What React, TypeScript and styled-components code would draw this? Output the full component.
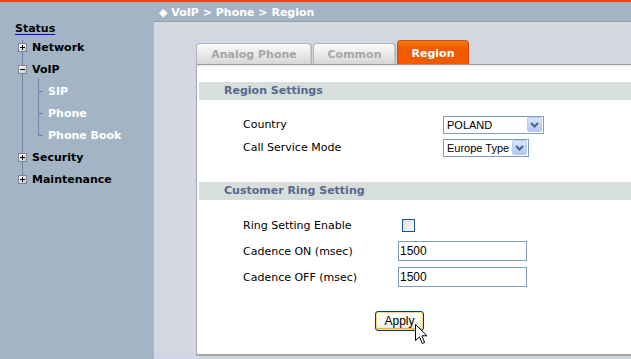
import React from 'react'
import styled, { createGlobalStyle } from 'styled-components'

const GlobalStyle = createGlobalStyle`
    html, body {
        margin: 0;
        padding: 0;
        background: #a3b5c5;
        overflow: hidden;
    }
    * { box-sizing: border-box; }
`

const verdana = `"DejaVu Sans", Verdana, sans-serif`
const arial = `"Liberation Sans", Arial, sans-serif`

const Page = styled.div`
    width: 631px;
    height: 359px;
    display: flex;
    flex-direction: column;
    font-family: ${verdana};
    font-size: 11px;
`

const TopStrip = styled.div`
    height: 2px;
    background: #f0450f;
    flex-shrink: 0;
`

const Body = styled.div`
    flex: 1;
    display: flex;
    min-height: 0;
`

const Sidebar = styled.nav`
    width: 154px;
    flex-shrink: 0;
    background: #a3b5c5;
    padding-top: 20px;
`

const StatusLink = styled.a`
    display: block;
    height: 14px;
    line-height: 14px;
    padding-left: 15px;
    font-weight: bold;
    color: #000;
    text-decoration: underline;
    text-decoration-color: #0000ff;
    text-underline-offset: 2px;
    cursor: pointer;
`

const Tree = styled.ul`
    position: relative;
    list-style: none;
    margin: 0;
    padding: 0;
    &::before {
        content: '';
        position: absolute;
        left: 22px;
        top: 4px;
        bottom: 10px;
        width: 1px;
        background: #7383a8;
    }
`

const SubTree = styled.ul`
    position: relative;
    list-style: none;
    margin: 0;
    padding: 0;
    &::before {
        content: '';
        position: absolute;
        left: 38px;
        top: -2px;
        bottom: 11px;
        width: 1px;
        background: #7383a8;
    }
`

const TreeRow = styled.li<{ $sub?: boolean }>`
    position: relative;
    height: 22px;
    display: flex;
    align-items: center;
    gap: 5px;
    padding-left: ${p => (p.$sub ? '48px' : '18px')};
    font-weight: bold;
    color: ${p => (p.$sub ? '#fff' : '#000')};
    ${p => p.$sub && `
        &::before {
            content: '';
            position: absolute;
            left: 38px;
            top: 11px;
            width: 5px;
            height: 1px;
            background: #7383a8;
        }
    `}
`

const Main = styled.main`
    flex: 1;
    display: flex;
    flex-direction: column;
    overflow: hidden;
    min-width: 0;
`

const Crumbs = styled.div`
    height: 20px;
    flex-shrink: 0;
    background: #a3b5c5;
    border-bottom: 1px solid #95a5a9;
    color: #fff;
    font-weight: bold;
    line-height: 21px;
    padding-left: 5px;
    white-space: nowrap;
`

const Canvas = styled.div`
    flex: 1;
    background: repeating-linear-gradient(to bottom, #cdd3ee 0 1px, #d8dcd6 1px 2px);
    padding: 18px 0 0 42px;
`

const Tabs = styled.div`
    display: flex;
    align-items: flex-end;
    gap: 1px;
    height: 24px;
`

const Tab = styled.div<{ $active?: boolean; $w: number }>`
    width: ${p => p.$w}px;
    height: ${p => (p.$active ? 24 : 21)}px;
    border-radius: 4px 4px 0 0;
    font-weight: bold;
    font-size: 11px;
    display: flex;
    align-items: center;
    justify-content: center;
    padding-top: ${p => (p.$active ? 2 : 0)}px;
    ${p =>
        p.$active
            ? `
        background: linear-gradient(#f27a10, #f05a00 30%, #f05a00);
        border: 1px solid #e04a00;
        border-bottom: none;
        color: #fff;
    `
            : `
        background: linear-gradient(#fbfbfb, #e6e6e6 60%, #d6d6d6);
        border: 1px solid #b4b4b4;
        border-bottom: none;
        box-shadow: inset -1px 0 0 #c8c8c8;
        color: #a6a6a6;
    `}
`

const Panel = styled.section`
    width: 470px;
    background: #fff;
    border-left: 1px solid #a8a8a8;
    border-top: 1px solid #9c9c9c;
    border-bottom: 2px solid #a8a8a8;
    box-shadow: inset 0 2px 2px -1px rgba(0, 0, 0, 0.12), 0 1px 0 #d0d0d0;
    padding: 17px 0 23px 2px;
`

const SectionBar = styled.div<{ $top?: number }>`
    height: 18px;
    margin-top: ${p => p.$top ?? 0}px;
    background: #d6dfdc;
    color: #56688e;
    font-weight: bold;
    line-height: 18px;
    padding-left: 25px;
`

const FormGrid = styled.div<{ $label: number; $top: number; $row: number }>`
    display: grid;
    grid-template-columns: ${p => p.$label}px auto;
    grid-auto-rows: ${p => p.$row}px;
    align-items: center;
    justify-items: start;
    margin-top: ${p => p.$top}px;
    padding-left: 44px;
`

const Label = styled.span`
    color: #000;
    font-size: 11px;
    white-space: nowrap;
`

const SelectBox = styled.div<{ $w: number }>`
    width: ${p => p.$w}px;
    height: 18px;
    border: 1px solid #7f9db9;
    background: #fff;
    display: flex;
    align-items: center;
    justify-content: space-between;
    padding: 0 1px 0 3px;
    font-family: ${arial};
    font-size: 11px;
    color: #000;
    white-space: nowrap;
    overflow: hidden;
`

const ArrowBtn = styled.span`
    width: 15px;
    height: 15px;
    flex-shrink: 0;
    border: 1px solid #b7cbf5;
    border-radius: 2px;
    background: linear-gradient(#dbe6fd, #c0d2fa 60%, #b2c6f6);
    display: flex;
    align-items: center;
    justify-content: center;
`

const TextInput = styled.input`
    width: 129px;
    height: 20px;
    border: 1px solid #7f9db9;
    padding: 0 1px;
    font-family: ${arial};
    font-size: 12px;
    color: #000;
    outline: none;
`

const CheckBox = styled.span`
    width: 13px;
    height: 13px;
    margin-left: 4px;
    border: 1px solid #1c5180;
    background: linear-gradient(135deg, #dcdcd7, #fbfbfa);
`

const ButtonRow = styled.div`
    margin-top: 21px;
    padding-left: 176px;
`

const ButtonWrap = styled.div`
    position: relative;
    display: inline-block;
`

const ApplyButton = styled.button`
    width: 49px;
    height: 20px;
    border: 1px solid #003c74;
    border-radius: 3px;
    background: linear-gradient(#fffffe, #f4f3ee 70%, #e6e2d4);
    box-shadow: inset 0 0 0 1px #fbd67a, inset 0 -1px 0 1px #f1ae32;
    font-family: ${arial};
    font-size: 12px;
    color: #000;
    padding: 0;
`

const Pointer = styled.svg`
    position: absolute;
    left: 40px;
    top: 13px;
`

const Toggle = ({ open }: { open?: boolean }) => (
    <svg width="9" height="9" viewBox="0 0 9 9" style={{ position: 'relative', flexShrink: 0 }}>
        <defs>
            <linearGradient id={open ? 'tgo' : 'tgc'} x1="0" y1="0" x2="1" y2="1">
                <stop offset="0" stopColor="#ffffff" />
                <stop offset="1" stopColor="#c4c4c4" />
            </linearGradient>
        </defs>
        <rect x="0.5" y="0.5" width="8" height="8" fill={`url(#${open ? 'tgo' : 'tgc'})`} stroke="#7c8696" />
        <path d="M2 4.5 H7" stroke="#000" />
        {!open && <path d="M4.5 2 V7" stroke="#000" />}
    </svg>
)

const Select = ({ value, width }: { value: string; width: number }) => (
    <SelectBox $w={width}>
        <span>{value}</span>
        <ArrowBtn>
            <svg width="9" height="6" viewBox="0 0 9 6">
                <path d="M1 1 L4.5 4.5 L8 1" fill="none" stroke="#4d6185" strokeWidth="2" />
            </svg>
        </ArrowBtn>
    </SelectBox>
)

export default function App() {
    return (
        <>
            <GlobalStyle />
            <Page>
                <TopStrip />
                <Body>
                    <Sidebar>
                        <StatusLink>Status</StatusLink>
                        <Tree>
                            <TreeRow><Toggle />Network</TreeRow>
                            <TreeRow><Toggle open />VoIP</TreeRow>
                            <SubTree>
                                <TreeRow $sub>SIP</TreeRow>
                                <TreeRow $sub>Phone</TreeRow>
                                <TreeRow $sub>Phone Book</TreeRow>
                            </SubTree>
                            <TreeRow><Toggle />Security</TreeRow>
                            <TreeRow><Toggle />Maintenance</TreeRow>
                        </Tree>
                    </Sidebar>
                    <Main>
                        <Crumbs>◆ VoIP &gt; Phone &gt; Region</Crumbs>
                        <Canvas>
                            <Tabs>
                                <Tab $w={116}>Analog Phone</Tab>
                                <Tab $w={83}>Common</Tab>
                                <Tab $w={72} $active>Region</Tab>
                            </Tabs>
                            <Panel>
                                <SectionBar>Region Settings</SectionBar>
                                <FormGrid $label={200} $top={13} $row={23}>
                                    <Label>Country</Label>
                                    <Select value="POLAND" width={101} />
                                    <Label>Call Service Mode</Label>
                                    <Select value="Europe Type" width={86} />
                                </FormGrid>
                                <SectionBar $top={23}>Customer Ring Setting</SectionBar>
                                <FormGrid $label={155} $top={12} $row={26}>
                                    <Label>Ring Setting Enable</Label>
                                    <CheckBox />
                                    <Label>Cadence ON (msec)</Label>
                                    <TextInput defaultValue="1500" />
                                    <Label>Cadence OFF (msec)</Label>
                                    <TextInput defaultValue="1500" />
                                </FormGrid>
                                <ButtonRow>
                                    <ButtonWrap>
                                        <ApplyButton>Apply</ApplyButton>
                                        <Pointer width="13" height="21" viewBox="0 0 13 21">
                                            <path
                                                d="M0.5 0.5 L0.5 16.5 L4.5 12.8 L7.2 19.5 L9.6 18.5 L6.9 11.8 L12 11.8 Z"
                                                fill="#fff"
                                                stroke="#000"
                                                strokeWidth="1"
                                            />
                                        </Pointer>
                                    </ButtonWrap>
                                </ButtonRow>
                            </Panel>
                        </Canvas>
                    </Main>
                </Body>
            </Page>
        </>
    )
}
